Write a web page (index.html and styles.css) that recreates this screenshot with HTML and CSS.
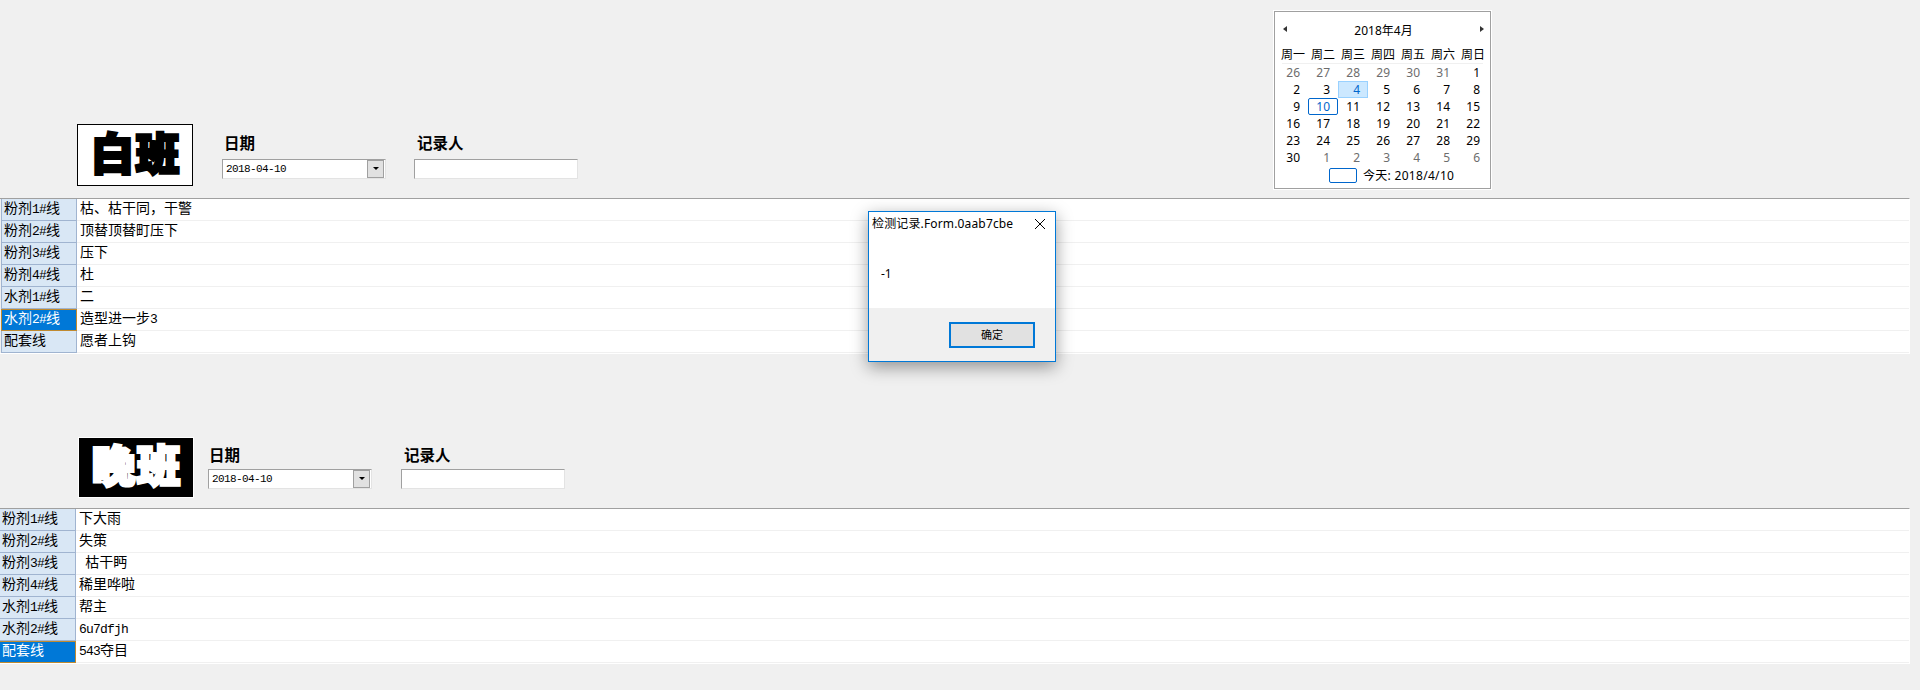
FILE: index.html
```html
<!DOCTYPE html>
<html lang="zh-CN">
<head>
<meta charset="utf-8">
<title>检测记录</title>
<link rel="stylesheet" href="styles.css">
</head>
<body>
<main class="page">
  <section class="shift shift-day">
    <header class="head">
      <div class="logo"><span>白班</span></div>
      <div class="field field-date">
        <label class="field-label">日期</label>
        <div class="control picker"><span>2018-04-10</span><i class="picker-btn"></i></div>
      </div>
      <div class="field field-person">
        <label class="field-label">记录人</label>
        <div class="control"></div>
      </div>
      <div class="calendar">
        <div class="cal-title"><i class="tri tri-left"></i><span>2018年4月</span><i class="tri tri-right"></i></div>
        <div class="cal-week"><span>周一</span><span>周二</span><span>周三</span><span>周四</span><span>周五</span><span>周六</span><span>周日</span></div>
        <div class="cal-days">
          <span class="other">26</span><span class="other">27</span><span class="other">28</span><span class="other">29</span><span class="other">30</span><span class="other">31</span><span>1</span>
          <span>2</span><span>3</span><span class="hover">4</span><span>5</span><span>6</span><span>7</span><span>8</span>
          <span>9</span><span class="today">10</span><span>11</span><span>12</span><span>13</span><span>14</span><span>15</span>
          <span>16</span><span>17</span><span>18</span><span>19</span><span>20</span><span>21</span><span>22</span>
          <span>23</span><span>24</span><span>25</span><span>26</span><span>27</span><span>28</span><span>29</span>
          <span>30</span><span class="other">1</span><span class="other">2</span><span class="other">3</span><span class="other">4</span><span class="other">5</span><span class="other">6</span>
        </div>
        <div class="cal-foot"><i class="cal-mark"></i><span>今天: 2018/4/10</span></div>
      </div>
    </header>
    <div class="grid">
      <div class="row"><div class="name">粉剂<b>1#</b>线</div><div class="val">枯、枯干同，干警</div></div>
      <div class="row"><div class="name">粉剂<b>2#</b>线</div><div class="val">顶替顶替町压下</div></div>
      <div class="row"><div class="name">粉剂<b>3#</b>线</div><div class="val">压下</div></div>
      <div class="row"><div class="name">粉剂<b>4#</b>线</div><div class="val">杜</div></div>
      <div class="row"><div class="name">水剂<b>1#</b>线</div><div class="val">二</div></div>
      <div class="row"><div class="name sel">水剂<b>2#</b>线</div><div class="val">造型进一步<b>3</b></div></div>
      <div class="row"><div class="name">配套线</div><div class="val">愿者上钩</div></div>
    </div>
  </section>

  <section class="shift shift-night">
    <header class="head">
      <div class="logo"><span>晚班</span></div>
      <div class="field field-date">
        <label class="field-label">日期</label>
        <div class="control picker"><span>2018-04-10</span><i class="picker-btn"></i></div>
      </div>
      <div class="field field-person">
        <label class="field-label">记录人</label>
        <div class="control"></div>
      </div>
    </header>
    <div class="grid">
      <div class="row"><div class="name">粉剂<b>1#</b>线</div><div class="val">下大雨</div></div>
      <div class="row"><div class="name">粉剂<b>2#</b>线</div><div class="val">失策</div></div>
      <div class="row"><div class="name">粉剂<b>3#</b>线</div><div class="val">&nbsp;&nbsp;枯干眄</div></div>
      <div class="row"><div class="name">粉剂<b>4#</b>线</div><div class="val">稀里哗啦</div></div>
      <div class="row"><div class="name">水剂<b>1#</b>线</div><div class="val">帮主</div></div>
      <div class="row"><div class="name">水剂<b>2#</b>线</div><div class="val"><b>6u7dfjh</b></div></div>
      <div class="row"><div class="name sel">配套线</div><div class="val"><b>543</b>夺目</div></div>
    </div>
  </section>

  <div class="dialog">
    <div class="dlg-title"><span>检测记录.Form.0aab7cbe</span>
      <svg class="dlg-close" width="10" height="10" viewBox="0 0 10 10"><path d="M0 0L10 10M10 0L0 10" stroke="#000" stroke-width="1" fill="none"/></svg>
    </div>
    <div class="dlg-body">-1</div>
    <div class="dlg-foot"><button class="dlg-btn">确定</button></div>
  </div>
</main>
</body>
</html>
```
FILE: styles.css
```css
* { box-sizing: border-box; }
html, body { margin: 0; padding: 0; }
body {
  background: #f0f0f0;
  color: #000;
  font-family: "Noto Sans CJK SC", sans-serif;
  width: 1920px;
  height: 690px;
  overflow: hidden;
}
.page { position: relative; width: 1920px; height: 690px; }

.head { display: flex; align-items: flex-end; }
.shift-day .head { height: 198px; padding-left: 77px; }
.shift-night .head { height: 154px; padding-left: 78px; }

.logo {
  width: 116px;
  display: flex;
  align-items: center;
  justify-content: center;
  font-family: "Noto Sans CJK SC", sans-serif;
  font-weight: 700;
  font-size: 43px;
  line-height: 1;
  letter-spacing: 2px;
  -webkit-text-stroke: 4px currentColor;
}
.logo span { margin: -8px -2px 0 0; }
.shift-day .logo {
  height: 62px;
  margin-bottom: 12px;
  background: #fff;
  border: 1px solid #000;
  color: #000;
}
.shift-night .logo {
  height: 61px;
  margin-bottom: 10px;
  background: #000;
  border: 1px solid #fff;
  color: #fff;
}

.field { display: flex; flex-direction: column; }
.shift-day .field { margin-bottom: 19px; }
.shift-night .field { margin-bottom: 19px; }
.shift-day .field-date { margin-left: 29px; }
.shift-day .field-person { margin-left: 28px; }
.shift-night .field-date { margin-left: 14px; }
.shift-night .field-person { margin-left: 29px; }

.field-label {
  font-size: 15.5px;
  font-weight: 700;
  line-height: 16px;
}
.shift-day .field-label { margin: 0 0 9px 2px; }
.shift-night .field-label { margin: 0 0 7px 1px; }
.shift-day .field-person .field-label { margin-left: 3px; }
.shift-night .field-person .field-label { margin-left: 3px; }

.control {
  width: 164px;
  height: 20px;
  background: #fff;
  border-style: solid;
  border-width: 1px;
  border-color: #a0a0a0 #e3e3e3 #e3e3e3 #a0a0a0;
  position: relative;
}
.picker {
  display: flex;
  align-items: center;
  padding-left: 3px;
  font-family: "Liberation Mono", monospace;
  font-size: 11px;
  letter-spacing: -0.6px;
}
.picker-btn {
  position: absolute;
  right: 1px;
  top: 0;
  width: 17px;
  height: 18px;
  background: #e1e1e1;
  border: 1px solid #a0a0a0;
}
.picker-btn::after {
  content: "";
  position: absolute;
  left: 5px;
  top: 6px;
  border-style: solid;
  border-width: 3px 3px 0;
  border-color: #000 transparent transparent;
}

.calendar {
  width: 217px;
  height: 178px;
  margin: 0 0 9px 696px;
  background: #fff;
  border: 1px solid #a0a0a0;
  outline: 1px solid #fff;
  padding: 0 3px;
  font-family: "Noto Sans", "Noto Sans CJK SC", sans-serif;
  font-size: 12px;
  line-height: 17px;
}
.cal-title {
  height: 34px;
  padding: 10px 3px 0 5px;
  display: flex;
  justify-content: space-between;
  align-items: flex-start;
}
.tri { width: 0; height: 0; margin-top: 4px; border-style: solid; border-color: transparent; }
.tri-left { border-width: 3.5px 4px 3.5px 0; border-right-color: #333; }
.tri-right { border-width: 3.5px 0 3.5px 4px; border-left-color: #333; }

.cal-week {
  display: grid;
  grid-template-columns: repeat(7, 30px);
  height: 18px;
  text-align: center;
  position: relative;
}
.cal-week::after {
  content: "";
  position: absolute;
  left: 4px;
  right: 4px;
  bottom: 0;
  height: 1px;
  background: #f0f0f0;
}
.cal-days {
  display: grid;
  grid-template-columns: repeat(7, 30px);
  grid-auto-rows: 17px;
}
.cal-days span { text-align: right; padding-right: 7px; border: 1px solid transparent; line-height: 15px; }
.cal-days .other { color: #6d6d6d; }
.cal-days .hover { background: #cce8ff; border-color: #99d1ff; color: #0066cc; }
.cal-days .today { border-color: #0066cc; border-radius: 2px; color: #0066cc; }
.cal-foot {
  display: flex;
  align-items: center;
  height: 17px;
  margin-top: 1px;
  padding-left: 51px;
  gap: 6px;
  letter-spacing: 0.3px;
}
.cal-mark {
  width: 28px;
  height: 15px;
  border: 1px solid #0066cc;
  border-radius: 2px;
}

.grid {
  width: 1910px;
  background: #fff;
  border-top: 1px solid #a0a0a0;
  border-right: 1px solid #fff;
  border-bottom: 1px solid #fff;
  font-size: 14px;
  line-height: 17px;
}
.shift-day .grid { padding-left: 1px; background: linear-gradient(#f0f0f0, #f0f0f0) left / 1px 100% no-repeat, #fff; }
.row { display: flex; height: 22px; }
.name {
  width: 76px;
  height: 22px;
  padding-left: 2px;
  background: #d9e7f5;
  border-right: 1px solid #a0b4d0;
  border-bottom: 1px solid #a0b4d0;
  border-left: 1px solid #a0b4d0;
}
.shift-night .name { width: 76px; padding-left: 2px; border-left: 0; }
.name.sel {
  background: #0078d7;
  color: #fff;
  border-color: #c08a30;
  border-top: 1px solid #c08a30;
  line-height: 15px;
}
.val {
  flex: 1;
  height: 22px;
  padding-left: 3px;
  border-bottom: 1px solid #f0f0f0;
}
b {
  font-family: "Liberation Mono", monospace;
  font-weight: 400;
  font-size: 13px;
  letter-spacing: -0.8px;
}

.dialog {
  position: absolute;
  left: 868px;
  top: 211px;
  width: 188px;
  height: 151px;
  background: #fff;
  border: 1px solid #0078d7;
  box-shadow: 0 5px 16px rgba(0, 0, 0, 0.4);
  display: flex;
  flex-direction: column;
  font-family: "Noto Sans", "Noto Sans CJK SC", sans-serif;
  font-size: 12px;
}
.dlg-title {
  height: 26px;
  padding: 3px 0 0 3px;
  line-height: 18px;
  letter-spacing: 0.15px;
  position: relative;
}
.dlg-close { position: absolute; right: 10px; top: 7px; }
.dlg-body {
  height: 70px;
  padding: 27px 0 0 12px;
  line-height: 18px;
}
.dlg-foot {
  flex: 1;
  background: #f0f0f0;
  padding: 14px 0 0 80px;
}
.dlg-btn {
  width: 86px;
  height: 26px;
  padding: 0;
  background: #e1e1e1;
  border: 2px solid #0078d7;
  font: inherit;
  font-size: 11px;
  color: #000;
  line-height: 20px;
}
```
